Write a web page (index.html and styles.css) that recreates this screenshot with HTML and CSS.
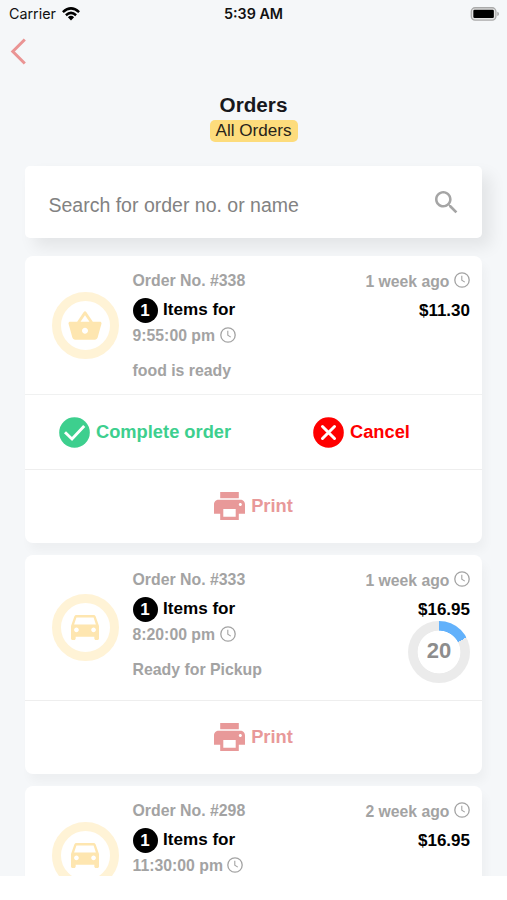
FILE: index.html
```html
<!DOCTYPE html>
<html lang="en">
<head>
<meta charset="utf-8">
<title>Orders</title>
<link rel="stylesheet" href="styles.css">
</head>
<body>
<svg class="sprite" aria-hidden="true">
  <symbol id="clock" viewBox="0 0 16 16"><circle cx="8" cy="8" r="7.2" fill="none" stroke="currentColor" stroke-width="1.3"/><path d="M7.8 3.8v4.5l3 1.8" fill="none" stroke="currentColor" stroke-width="1.1"/></symbol>
  <symbol id="print" viewBox="2 3 20 18"><path d="M19 8H5c-1.66 0-3 1.34-3 3v6h4v4h12v-4h4v-6c0-1.66-1.34-3-3-3zm-3 11H8v-5h8v5zm3-7c-.55 0-1-.45-1-1s.45-1 1-1 1 .45 1 1-.45 1-1 1zm-1-9H6v4h12V3z" fill="currentColor"/></symbol>
  <symbol id="car" viewBox="3 5 18 16"><path d="M18.92 6.01C18.72 5.42 18.16 5 17.5 5h-11c-.66 0-1.21.42-1.42 1.01L3 12v8c0 .55.45 1 1 1h1c.55 0 1-.45 1-1v-1h12v1c0 .55.45 1 1 1h1c.55 0 1-.45 1-1v-8l-2.080-5.990zM6.500 16c-.83 0-1.500-.67-1.500-1.500S5.670 13 6.500 13s1.500.67 1.500 1.500S7.330 16 6.500 16zm11 0c-.83 0-1.500-.67-1.500-1.500s.67-1.500 1.500-1.500 1.500.67 1.500 1.500-.67 1.500-1.500 1.500zM5 11l1.500-4.500h11L19 11H5z" fill="currentColor"/></symbol>
  <symbol id="basket" viewBox="0 2 24 19"><path d="M17.210 9l-4.380-6.560c-.19-.28-.51-.42-.83-.42-.32 0-.64.14-.83.430L6.790 9H2c-.55 0-1 .45-1 1 0 .09.010.18.040.270l2.540 9.270c.23.840 1 1.460 1.920 1.460h13c.92 0 1.690-.62 1.930-1.460l2.540-9.270L23 10c0-.55-.45-1-1-1h-4.790zM9 9l3-4.400L15 9H9zm3 8c-1.100 0-2-.9-2-2s.9-2 2-2 2 .9 2 2-.9 2-2 2z" fill="currentColor"/></symbol>
</svg>
<div class="screen">
  <header class="status">
    <div class="carrier"><span>Carrier</span>
      <svg class="wifi" viewBox="0 0 18 14"><g fill="none" stroke="#000" stroke-width="2.500"><path d="M.9 5.100Q9-2.400 17.100 5.100"/><path d="M3.900 8.200Q9 3.600 14.100 8.200"/></g><path d="M5.900 10.200Q9 7.400 12.100 10.200L9 13.500z"/></svg>
    </div>
    <div class="time">5:39 AM</div>
    <svg class="battery" viewBox="0 0 31 15"><rect x=".8" y=".8" width="26.400" height="13.200" rx="4" fill="#e4e4e4" stroke="#aaa" stroke-width="1.400"/><rect x="3" y="3" width="22" height="8.800" rx="1.300"/><path d="M28.600 5.200q2 .6 2 2.200t-2 2.200z" fill="#aaa"/></svg>
  </header>
  <nav class="nav"><svg class="back" viewBox="0 0 16 26"><path d="M14.800 1L2.800 13l12 12" fill="none" stroke="#ea9494" stroke-width="3"/></svg></nav>
  <div class="heading">
    <h1>Orders</h1>
    <span class="filter">All Orders</span>
  </div>
  <div class="search">
    <span>Search for order no. or name</span>
    <svg class="search-icon" viewBox="3 3 18 18"><path d="M15.500 14h-.79l-.28-.270C15.410 12.590 16 11.110 16 9.500 16 5.910 13.090 3 9.500 3S3 5.910 3 9.500 5.910 16 9.500 16c1.610 0 3.090-.59 4.230-1.570l.270.280v.790l5 4.990L20.490 19l-4.990-5zm-6 0C7.010 14 5 11.990 5 9.500S7.010 5 9.500 5 14 7.010 14 9.500 11.990 14 9.500 14z" fill="#a5a5a5"/></svg>
  </div>
  <main class="list">
    <article class="card">
      <div class="body">
        <div class="badge"><svg class="basket"><use href="#basket"/></svg></div>
        <div class="info">
          <div class="number">Order No. #338</div>
          <div class="items"><b class="count">1</b>Items for</div>
          <div class="due"><span>9:55:00 pm</span><svg class="clock"><use href="#clock"/></svg></div>
          <div class="state">food is ready</div>
        </div>
        <div class="side">
          <div class="ago"><span>1 week ago</span><svg class="clock"><use href="#clock"/></svg></div>
          <div class="price">$11.30</div>
        </div>
      </div>
      <div class="actions">
        <div class="action complete"><svg class="round" viewBox="0 0 31 31"><circle cx="15.500" cy="15.500" r="15.300" fill="#3dcf8e"/><path d="M6 15.300l7 6.700L25.200 9" fill="none" stroke="#fff" stroke-width="2.900"/></svg>Complete order</div>
        <div class="action cancel"><svg class="round" viewBox="0 0 31 31"><circle cx="15.500" cy="15.500" r="15.300" fill="#f00"/><path d="M9.500 9.500l12 12M21.500 9.500l-12 12" fill="none" stroke="#fff" stroke-width="3" stroke-linecap="round"/></svg>Cancel</div>
      </div>
      <div class="print"><svg><use href="#print"/></svg>Print</div>
    </article>
    <article class="card">
      <div class="body tall">
        <div class="badge"><svg class="car"><use href="#car"/></svg></div>
        <div class="info">
          <div class="number">Order No. #333</div>
          <div class="items"><b class="count">1</b>Items for</div>
          <div class="due"><span>8:20:00 pm</span><svg class="clock"><use href="#clock"/></svg></div>
          <div class="state">Ready for Pickup</div>
        </div>
        <div class="side">
          <div class="ago"><span>1 week ago</span><svg class="clock"><use href="#clock"/></svg></div>
          <div class="price">$16.95</div>
          <div class="timer">20</div>
        </div>
      </div>
      <div class="print"><svg><use href="#print"/></svg>Print</div>
    </article>
    <article class="card">
      <div class="body">
        <div class="badge"><svg class="car"><use href="#car"/></svg></div>
        <div class="info">
          <div class="number">Order No. #298</div>
          <div class="items"><b class="count">1</b>Items for</div>
          <div class="due"><span>11:30:00 pm</span><svg class="clock"><use href="#clock"/></svg></div>
        </div>
        <div class="side">
          <div class="ago"><span>2 week ago</span><svg class="clock"><use href="#clock"/></svg></div>
          <div class="price">$16.95</div>
        </div>
      </div>
    </article>
  </main>
</div>
</body>
</html>
```
FILE: styles.css
```css
* { box-sizing: border-box; }
html, body { margin: 0; height: 900px; overflow: hidden; background: #fff; }
body { font-family: "Liberation Sans", Arial, sans-serif; color: #000; }
svg { display: block; flex: none; }
.sprite { position: absolute; width: 0; height: 0; }
.screen { height: 876px; overflow: hidden; background: #f5f7f9; }

.status { display: grid; grid-template-columns: 1fr auto 1fr; align-items: center; height: 27px; padding: 0 7px 0 9px; font: 14.300px/27px Inter, sans-serif; color: #111; }
.carrier { display: flex; align-items: center; gap: 6px; }
.wifi { width: 18px; height: 14px; }
.time { margin-left: -2px; font-weight: 600; }
.battery { width: 30px; height: 14px; justify-self: end; }
.nav { height: 64px; padding: 11px 0 0 10px; }
.back { width: 16px; height: 27px; }

.heading { display: flex; flex-direction: column; align-items: center; height: 75px; }
h1 { margin: 0; font-size: 20.700px; line-height: 28px; color: #18181c; }
.filter { height: 22px; margin-top: 1px; padding: 0 6px; border-radius: 5px; background: #fddc7c; font-size: 17.100px; line-height: 22px; color: #27231a; }

.search { display: flex; justify-content: space-between; height: 72px; margin: 0 25px 0 25px; padding: 0 24px 0 23.500px; border-radius: 5px; background: #fff; box-shadow: 9px 9px 16px rgba(0, 0, 0, .075); font-size: 19.500px; line-height: 79px; color: #828282; }
.search-icon { width: 23px; height: 23px; margin-top: 25px; }

.list { display: flex; flex-direction: column; gap: 12.700px; margin: 18.300px 25px 0 25px; }
.card { border-radius: 8px; background: #fff; box-shadow: 4px 8px 10px rgba(0, 0, 0, .03); }
.body { display: flex; height: 138px; padding: 0 12px 0 26.500px; }
.body.tall { height: 144.300px; }
.badge { display: flex; flex: none; align-items: center; justify-content: center; align-self: center; width: 67px; height: 67px; border: 9.500px solid #fff3d6; border-radius: 50%; color: #fee6b0; }
.basket { width: 36px; height: 29px; }
.car { width: 28px; height: 25px; }
.info { flex: 1; padding: 12.800px 0 0 14px; font-weight: bold; }
.number, .due, .state, .ago { color: #a3a3a3; white-space: nowrap; }
.number { font-size: 15.850px; line-height: 24px; }
.items { display: flex; align-items: center; gap: 5.500px; height: 34px; font-size: 17.100px; }
.count { width: 25px; height: 25px; border-radius: 50%; background: #000; color: #fff; text-align: center; line-height: 25px; font-size: 17px; }
.due { display: flex; align-items: center; gap: 4.500px; height: 18px; font-size: 15.800px; }
.clock { width: 16px; height: 16px; margin-top: -3px; }
.state { margin-top: 16px; font-size: 15.850px; line-height: 20px; }
.side { display: flex; flex-direction: column; align-items: flex-end; padding-top: 12px; font-weight: bold; }
.ago { display: flex; align-items: center; gap: 4.500px; height: 27px; font-size: 15.750px; }
.ago .clock { margin-top: -3px; }
.price { font-size: 17px; line-height: 31px; }
.timer { width: 62px; height: 62px; margin-top: -4.500px; border-radius: 50%; background: radial-gradient(circle, #fff 21px, transparent 21.700px), conic-gradient(#62b1fb 0 62deg, #ebebeb 62deg); color: #8d8d8d; text-align: center; font-size: 22px; line-height: 60px; }

.actions { display: grid; grid-template-columns: 1fr 1fr; height: 74.500px; border-top: 1px solid #f0f1f1; }
.action { display: flex; align-items: center; gap: 6px; font-size: 18.300px; font-weight: bold; white-space: nowrap; }
.complete { padding-left: 34px; color: #3dcf8e; }
.cancel { padding-left: 59.500px; color: #f00; }
.round { width: 31px; height: 31px; }
.print { display: flex; align-items: center; justify-content: center; gap: 6px; height: 74px; border-top: 1px solid #eee; font-size: 18.300px; font-weight: bold; color: #e89999; }
.print svg { width: 31px; height: 28px; }
```
